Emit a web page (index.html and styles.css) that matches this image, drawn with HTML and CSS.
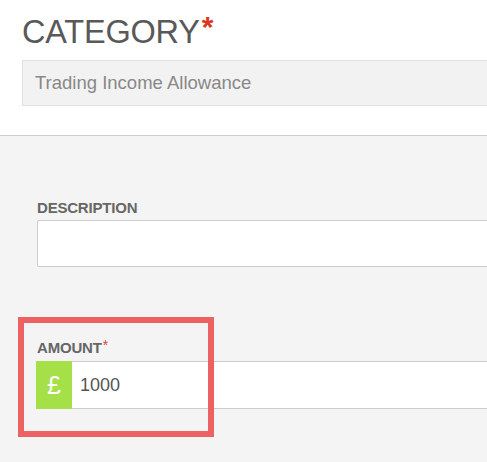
FILE: index.html
```
<!DOCTYPE html>
<html lang="en">
<head>
<meta charset="utf-8">
<title>Category</title>
<link rel="stylesheet" href="styles.css">
</head>
<body>
<div class="page">
  <section class="top">
    <h1 class="cat-title">CATEGORY<span class="req">*</span></h1>
    <div class="cat-value">Trading Income Allowance</div>
  </section>
  <section class="form">
    <div class="field field-desc">
      <label class="label">DESCRIPTION</label>
      <div class="input"></div>
    </div>
    <div class="field field-amount">
      <label class="label">AMOUNT<span class="req-small">*</span></label>
      <div class="input-group">
        <span class="addon">£</span>
        <div class="input input-amount">1000</div>
      </div>
      <div class="highlight"></div>
    </div>
  </section>
</div>
</body>
</html>
```

FILE: styles.css
```
html, body {
  margin: 0;
  padding: 0;
}
body {
  font-family: "Liberation Sans", Arial, sans-serif;
  background: #f4f4f4;
  overflow: hidden;
  width: 487px;
  height: 462px;
}
.page {
  width: 487px;
  height: 462px;
  overflow: hidden;
}
.top {
  background: #ffffff;
  border-bottom: 1px solid #cccccc;
  padding: 16px 0 0 22px;
  box-sizing: border-box;
  height: 136px;
}
.cat-title {
  margin: 0;
  font-weight: normal;
  font-size: 32.5px;
  line-height: 32px;
  color: #595959;
  letter-spacing: -0.2px;
}
.req {
  color: #d9381e;
  font-size: 30px;
  font-weight: bold;
  vertical-align: top;
  line-height: 22px;
  margin-left: 2px;
}
.cat-value {
  margin-top: 12px;
  width: 500px;
  height: 46px;
  box-sizing: border-box;
  background: #f2f2f2;
  border: 1px solid #e2e2e2;
  border-right: none;
  padding: 0 0 0 12px;
  font-size: 18.5px;
  line-height: 44px;
  color: #888888;
}
.form {
  padding: 63px 0 0 37px;
}
.field {
  position: relative;
}
.label {
  display: block;
  font-size: 15px;
  font-weight: bold;
  line-height: 18px;
  color: #666666;
  margin-bottom: 3px;
  letter-spacing: -0.2px;
}
.req-small {
  color: #d9453a;
  font-weight: normal;
  font-size: 14px;
  vertical-align: top;
  line-height: 12px;
  margin-left: 1px;
}
.input {
  width: 500px;
  height: 47px;
  box-sizing: border-box;
  background: #ffffff;
  border: 1px solid #cccccc;
  border-right: none;
  border-radius: 2px 0 0 2px;
}
.field-amount {
  margin-top: 72px;
}
.field-amount .label {
  margin-bottom: 4px;
}
.input-group {
  display: flex;
  margin-left: -1px;
}
.addon {
  width: 36px;
  height: 48px;
  flex: none;
  background: #a5e048;
  color: #ffffff;
  font-size: 25px;
  line-height: 48px;
  text-align: center;
}
.input-amount {
  height: 48px;
  border-left: none;
  border-radius: 0;
  padding-left: 8px;
  font-size: 18px;
  line-height: 46px;
  color: #555555;
}
.highlight {
  position: absolute;
  left: -19px;
  top: -22px;
  width: 196px;
  height: 120px;
  box-sizing: border-box;
  border: 6px solid #ec6262;
  pointer-events: none;
}
```
